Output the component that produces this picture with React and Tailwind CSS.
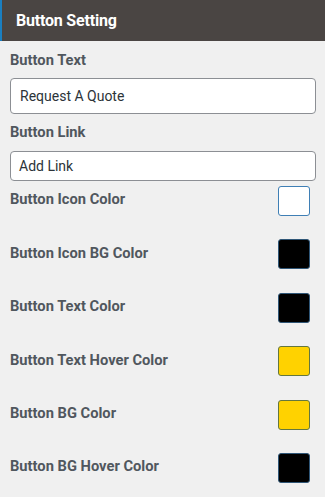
import React from "react";

const colorRows = [
  { label: "Button Icon Color", fill: "bg-white", border: "border-[#3f7fb5]" },
  { label: "Button Icon BG Color", fill: "bg-black", border: "border-[#2f5677]" },
  { label: "Button Text Color", fill: "bg-black", border: "border-[#2f5677]" },
  { label: "Button Text Hover Color", fill: "bg-[#ffd200]", border: "border-[#64773f]" },
  { label: "Button BG Color", fill: "bg-[#ffd200]", border: "border-[#64773f]" },
  { label: "Button BG Hover Color", fill: "bg-black", border: "border-[#2f5677]" },
];

export default function App() {
  return (
    <div className="w-[325px] h-[497px] bg-[#f0f0f0] font-['Roboto',sans-serif] overflow-hidden">
      {/* Panel header */}
      <div className="h-[41px] bg-[#4a4543] border-l-2 border-[#1a7fc1] flex items-center pl-[14px]">
        <h2 className="text-white text-[16px] font-bold tracking-[-0.2px]">Button Setting</h2>
      </div>

      <div className="px-[10px] pr-[9px]">
        <label className="block mt-[10px] text-[14.7px] font-bold text-[#50575e] leading-[18px]">
          Button Text
        </label>
        <div className="mt-[9px] h-[36px] bg-white border border-[#8c8f94] rounded-[4px] flex items-center pl-[9px] text-[14px] text-[#2c3338]">
          Request A Quote
        </div>

        <label className="block mt-[9px] text-[14.7px] font-bold text-[#50575e] leading-[18px]">
          Button Link
        </label>
        <div className="mt-[10px] h-[30px] bg-white border border-[#8c8f94] rounded-[4px] flex items-center pl-[8px] text-[14px] text-[#2c3338]">
          Add Link
        </div>

        <div className="mt-[5px] flex flex-col gap-[23.4px]">
          {colorRows.map((row) => (
            <div key={row.label} className="flex items-center justify-between h-[30px]">
              <span className="text-[14.7px] font-bold text-[#50575e] -mt-[3px]">{row.label}</span>
              <span className={`w-[32px] h-[30px] mr-[6px] rounded-[3px] border ${row.fill} ${row.border}`} />
            </div>
          ))}
        </div>
      </div>
    </div>
  );
}
